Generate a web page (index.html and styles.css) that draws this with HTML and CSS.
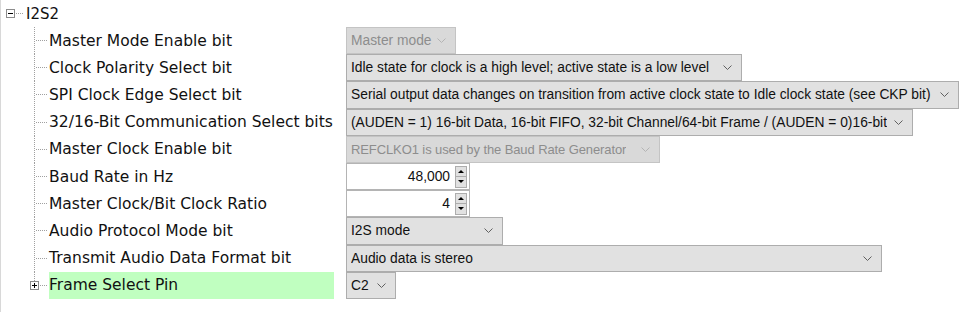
FILE: index.html
```html
<!DOCTYPE html>
<html>
<head>
<meta charset="utf-8">
<link rel="stylesheet" href="styles.css">
</head>
<body>
<div class="panel">
  <div class="root">
    <span class="box"><span class="minus"></span></span>
    <span class="rstub"></span>
    <span class="rlabel">I2S2</span>
  </div>

  <div class="row">
    <div class="tree"><span class="vline"></span><span class="stub"></span></div>
    <div class="label">Master Mode Enable bit</div>
    <div class="value"><div class="combo disabled w-master"><span class="ctext">Master mode</span><svg class="chev" width="9" height="5" viewBox="0 0 9 5"><polyline points="0.5,0.5 4.5,4.5 8.5,0.5"/></svg></div></div>
  </div>

  <div class="row">
    <div class="tree"><span class="vline"></span><span class="stub"></span></div>
    <div class="label">Clock Polarity Select bit</div>
    <div class="value"><div class="combo w-idle"><span class="ctext">Idle state for clock is a high level; active state is a low level</span><svg class="chev" width="9" height="5" viewBox="0 0 9 5"><polyline points="0.5,0.5 4.5,4.5 8.5,0.5"/></svg></div></div>
  </div>

  <div class="row">
    <div class="tree"><span class="vline"></span><span class="stub"></span></div>
    <div class="label">SPI Clock Edge Select bit</div>
    <div class="value"><div class="combo w-serial"><span class="ctext">Serial output data changes on transition from active clock state to Idle clock state (see CKP bit)</span><svg class="chev" width="9" height="5" viewBox="0 0 9 5"><polyline points="0.5,0.5 4.5,4.5 8.5,0.5"/></svg></div></div>
  </div>

  <div class="row">
    <div class="tree"><span class="vline"></span><span class="stub"></span></div>
    <div class="label">32/16-Bit Communication Select bits</div>
    <div class="value"><div class="combo w-auden"><span class="ctext">(AUDEN = 1) 16-bit Data, 16-bit FIFO, 32-bit Channel/64-bit Frame / (AUDEN = 0)16-bit</span><svg class="chev" width="9" height="5" viewBox="0 0 9 5"><polyline points="0.5,0.5 4.5,4.5 8.5,0.5"/></svg></div></div>
  </div>

  <div class="row">
    <div class="tree"><span class="vline"></span><span class="stub"></span></div>
    <div class="label">Master Clock Enable bit</div>
    <div class="value"><div class="combo disabled w-refclk"><span class="ctext tight">REFCLKO1 is used by the Baud Rate Generator</span><svg class="chev" width="9" height="5" viewBox="0 0 9 5"><polyline points="0.5,0.5 4.5,4.5 8.5,0.5"/></svg></div></div>
  </div>

  <div class="row">
    <div class="tree"><span class="vline"></span><span class="stub"></span></div>
    <div class="label">Baud Rate in Hz</div>
    <div class="value"><div class="spin"><span class="num">48,000</span><span class="btns"><span class="sbtn"><span class="up"></span></span><span class="sbtn"><span class="down"></span></span></span></div></div>
  </div>

  <div class="row">
    <div class="tree"><span class="vline"></span><span class="stub"></span></div>
    <div class="label">Master Clock/Bit Clock Ratio</div>
    <div class="value"><div class="spin"><span class="num">4</span><span class="btns"><span class="sbtn"><span class="up"></span></span><span class="sbtn"><span class="down"></span></span></span></div></div>
  </div>

  <div class="row">
    <div class="tree"><span class="vline"></span><span class="stub"></span></div>
    <div class="label">Audio Protocol Mode bit</div>
    <div class="value"><div class="combo w-i2s"><span class="ctext">I2S mode</span><svg class="chev" width="9" height="5" viewBox="0 0 9 5"><polyline points="0.5,0.5 4.5,4.5 8.5,0.5"/></svg></div></div>
  </div>

  <div class="row">
    <div class="tree"><span class="vline"></span><span class="stub"></span></div>
    <div class="label">Transmit Audio Data Format bit</div>
    <div class="value"><div class="combo w-audio"><span class="ctext">Audio data is stereo</span><svg class="chev" width="9" height="5" viewBox="0 0 9 5"><polyline points="0.5,0.5 4.5,4.5 8.5,0.5"/></svg></div></div>
  </div>

  <div class="row last">
    <div class="tree"><span class="vline"></span><span class="box pbox"><span class="minus"></span><span class="vbar"></span></span><span class="stub short"></span></div>
    <div class="label selected">Frame Select Pin</div>
    <div class="value"><div class="combo w-c2"><span class="ctext">C2</span><svg class="chev" width="9" height="5" viewBox="0 0 9 5"><polyline points="0.5,0.5 4.5,4.5 8.5,0.5"/></svg></div></div>
  </div>
</div>
</body>
</html>
```

FILE: styles.css
```css
html, body {
  margin: 0;
  padding: 0;
  background: #ffffff;
}

.panel {
  height: 312px;
  border-left: 1px solid #d8d8d8;
  box-sizing: border-box;
  font-family: "DejaVu Sans", Verdana, sans-serif;
  color: #111;
}

.root {
  height: 27px;
  display: flex;
  align-items: center;
  padding-left: 5px;
}

.box {
  width: 9px;
  height: 9px;
  box-sizing: border-box;
  border: 1px solid #8c8c8c;
  background: #fff;
  display: flex;
  align-items: center;
  justify-content: center;
  position: relative;
  flex: none;
}

.minus {
  width: 5px;
  height: 1px;
  background: #000;
}

.rstub {
  width: 8px;
  height: 1px;
  margin-left: 1px;
  background: repeating-linear-gradient(to right, #a0a0a0 0 1px, transparent 1px 2px);
}

.rlabel {
  margin-left: 2px;
  font-size: 15px;
}

.row {
  height: 27.2px;
  display: flex;
}

.tree {
  width: 48px;
  flex: none;
  display: flex;
  align-items: center;
  padding-left: 33px;
  box-sizing: border-box;
}

.vline {
  width: 1px;
  align-self: stretch;
  flex: none;
  background: repeating-linear-gradient(to bottom, #a0a0a0 0 1px, transparent 1px 2px);
}

.row.last .vline {
  align-self: flex-start;
  height: 50%;
}

.stub {
  width: 11px;
  height: 1px;
  margin-left: 1px;
  flex: none;
  background: repeating-linear-gradient(to right, #a0a0a0 0 1px, transparent 1px 2px);
}

.pbox {
  margin-left: -5px;
}

.pbox .vbar {
  position: absolute;
  left: 3px;
  top: 1px;
  width: 1px;
  height: 5px;
  background: #000;
}

.stub.short {
  width: 7px;
  margin-left: 1px;
}

.label {
  width: 285px;
  flex: none;
  display: flex;
  align-items: center;
  font-size: 15.5px;
  white-space: nowrap;
  box-sizing: border-box;
}

.label.selected {
  background: #c0ffc0;
}

.value {
  margin-left: 12px;
  display: flex;
}

.combo {
  height: 100%;
  box-sizing: border-box;
  border: 1px solid #adadad;
  background: #e1e1e1;
  display: flex;
  align-items: center;
  padding: 0 9px 0 4px;
  font-family: "Liberation Sans", Arial, sans-serif;
  font-size: 13.8px;
  white-space: nowrap;
  overflow: hidden;
}

.combo .ctext {
  overflow: hidden;
}

.combo .ctext.tight {
  font-size: 13px;
  letter-spacing: -0.1px;
}

.combo .chev {
  margin-left: auto;
  flex: none;
  fill: none;
  stroke: #606060;
  stroke-width: 1;
}

.combo.disabled {
  background: #d9d9d9;
  border-color: #c4c4c4;
  color: #8d8d8d;
}

.combo.disabled .chev {
  stroke: #b4b4b4;
}

.w-master { width: 110px; }
.w-idle { width: 396px; }
.w-serial { width: 613px; }
.w-auden { width: 567px; }
.w-refclk { width: 314px; }
.w-i2s { width: 157px; }
.w-audio { width: 536px; }
.w-c2 { width: 50px; }

.spin {
  width: 124px;
  height: 100%;
  box-sizing: border-box;
  border: 1px solid #b4b4b4;
  background: #fff;
  display: flex;
  align-items: center;
  justify-content: flex-end;
  padding-right: 2px;
  font-family: "Liberation Sans", Arial, sans-serif;
  font-size: 13.8px;
}

.btns {
  display: flex;
  flex-direction: column;
  margin-left: 5px;
}

.sbtn {
  width: 12px;
  height: 11px;
  box-sizing: border-box;
  border: 1px solid #adadad;
  background: #e1e1e1;
  display: flex;
  align-items: center;
  justify-content: center;
}

.sbtn + .sbtn {
  border-top: none;
}

.up {
  width: 0;
  height: 0;
  border-left: 3px solid transparent;
  border-right: 3px solid transparent;
  border-bottom: 3px solid #000;
}

.down {
  width: 0;
  height: 0;
  border-left: 3px solid transparent;
  border-right: 3px solid transparent;
  border-top: 3px solid #000;
}
```
